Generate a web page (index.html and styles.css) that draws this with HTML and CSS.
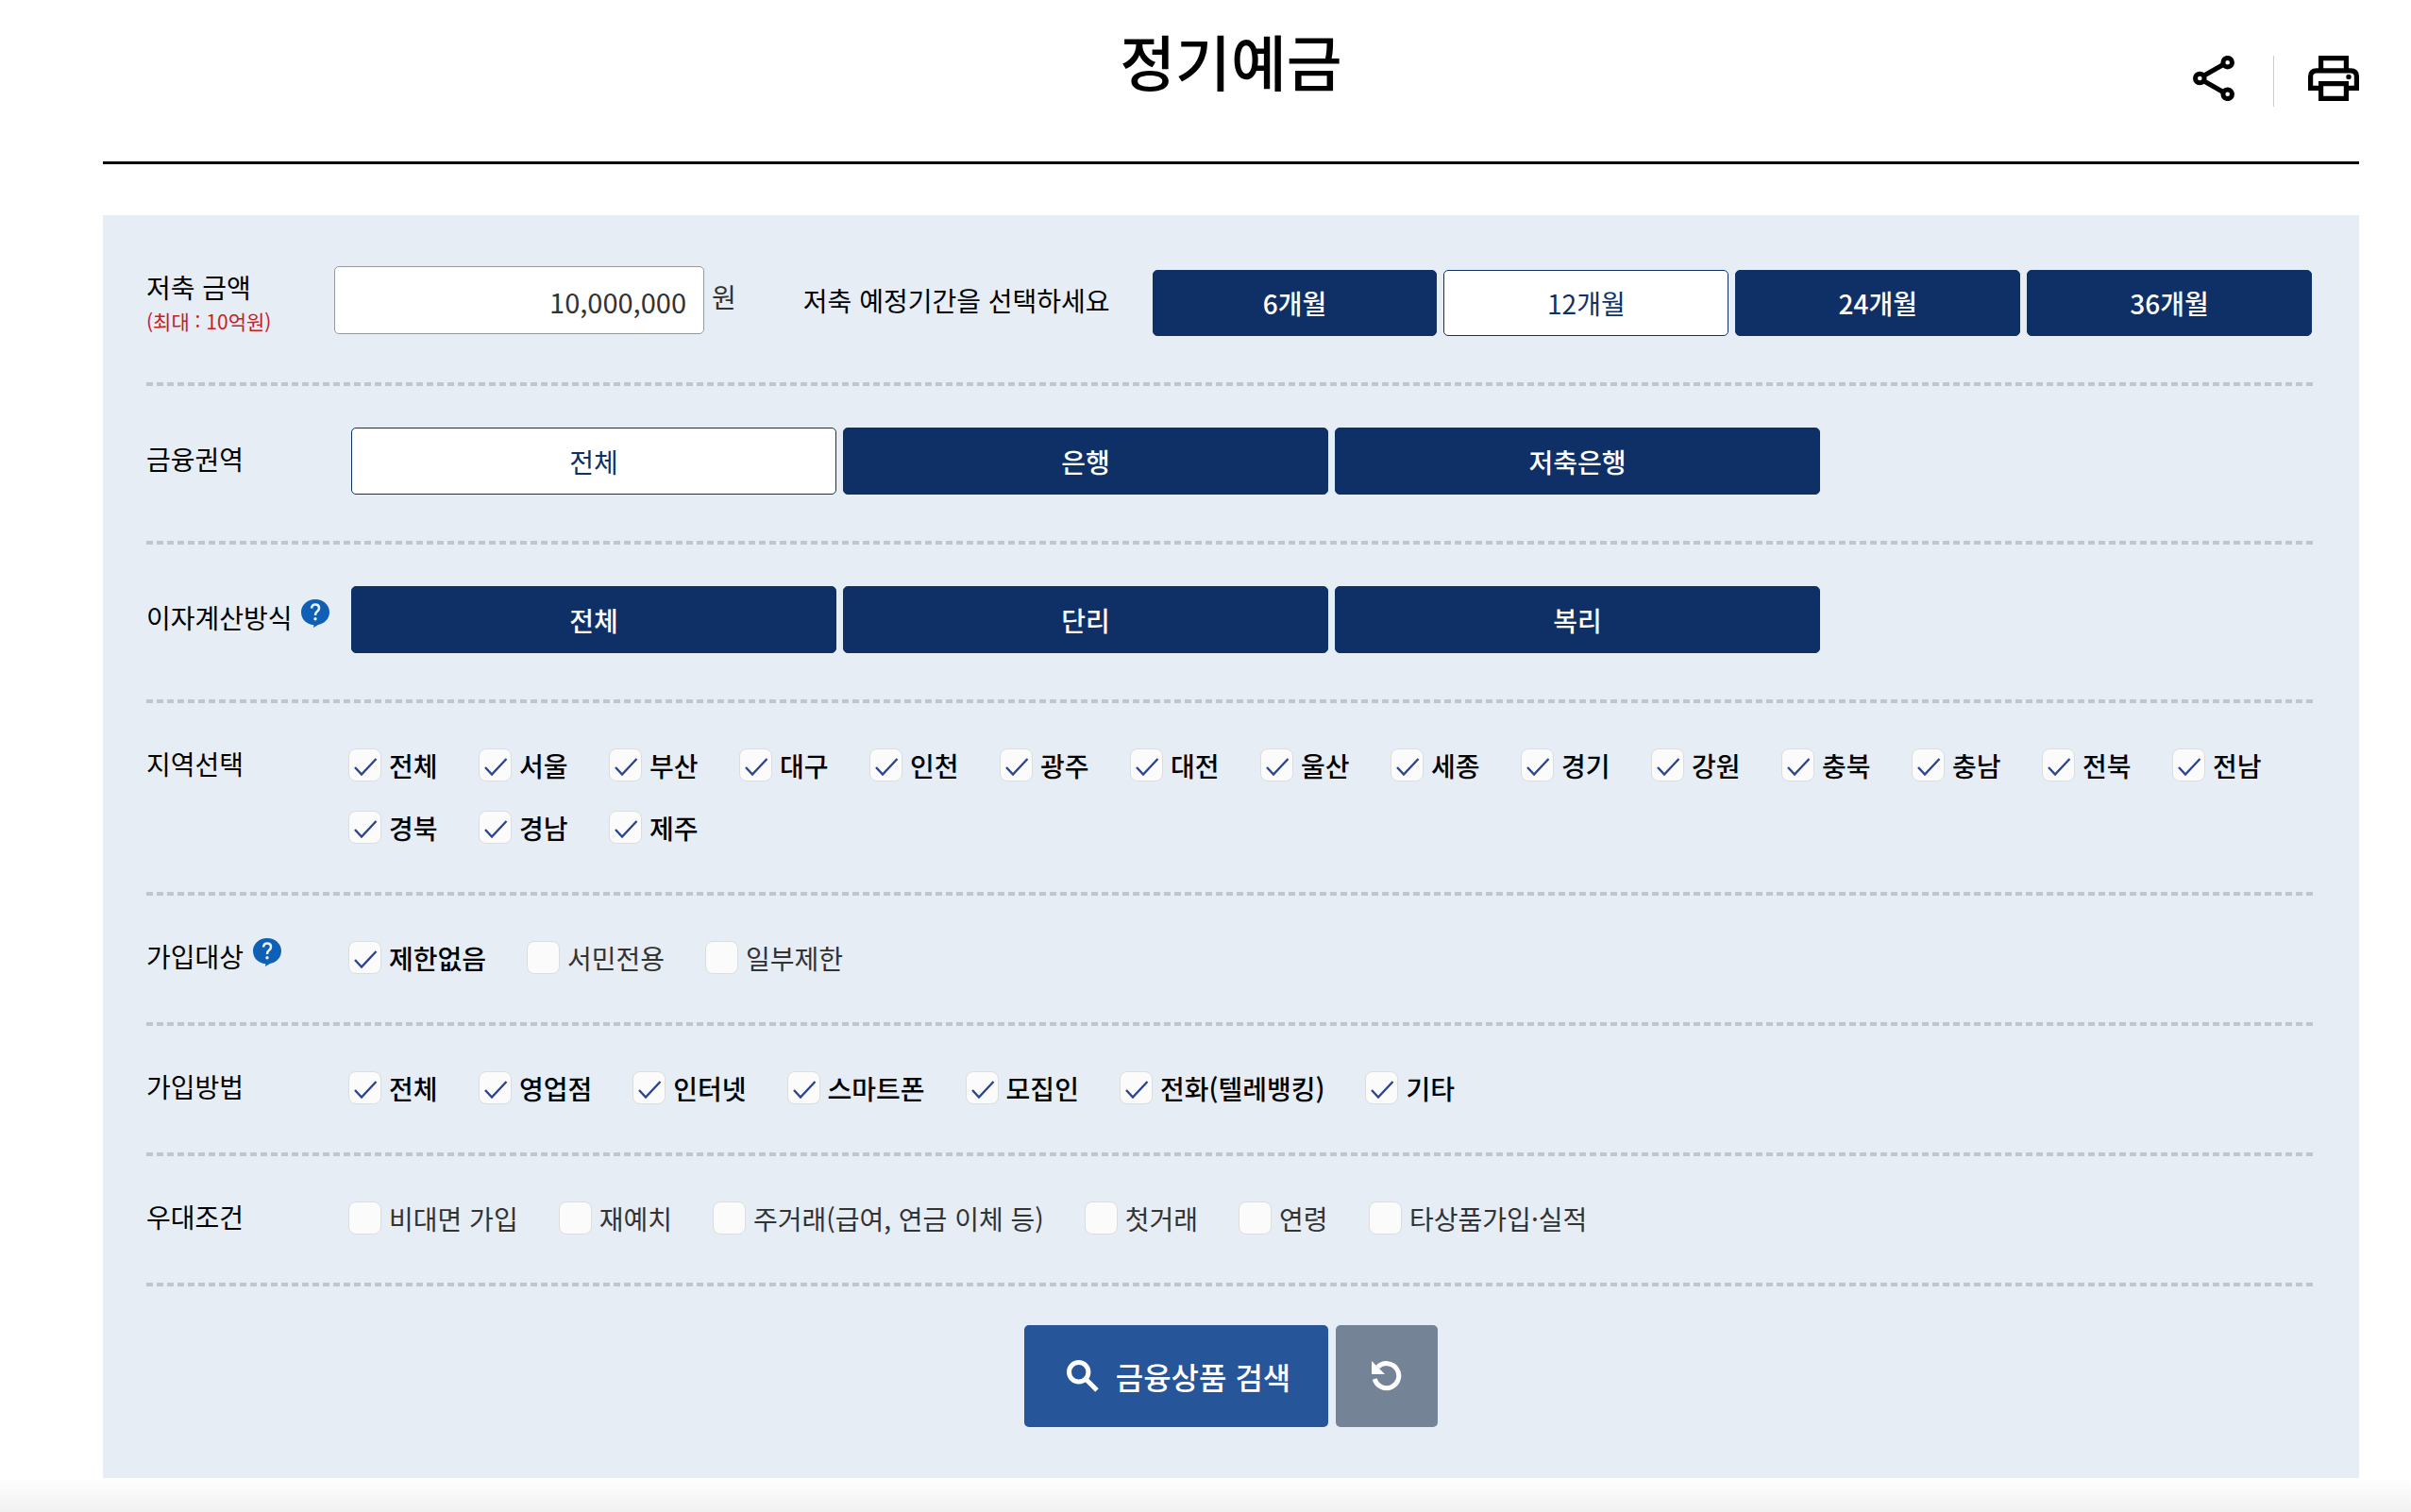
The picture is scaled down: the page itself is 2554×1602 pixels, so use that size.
FILE: index.html
```
<!DOCTYPE html>
<html lang="ko">
<head>
    <meta charset="UTF-8">
    <meta name="viewport" content="width=device-width, initial-scale=1.0">
    <title>정기예금</title>
    <link rel="stylesheet" href="styles.css">
</head>
<body>
    <div class="wrap">
        <header class="header">
            <h1>정기예금</h1>
            <div class="tools">
                <button type="button" class="icon-btn" aria-label="공유">
                    <svg width="44" height="48" viewBox="0 0 44 48" fill="none" stroke="#000" stroke-width="5">
                        <path d="M11 21.500L32 9.500M11 26.500L32 38.500"/>
                        <circle cx="7.300" cy="24" r="4.800"/>
                        <circle cx="36.700" cy="7.200" r="4.800"/>
                        <circle cx="36.700" cy="40.800" r="4.800"/>
                    </svg>
                </button>
                <span class="bar"></span>
                <button type="button" class="icon-btn" aria-label="인쇄">
                    <svg width="54" height="48" viewBox="0 0 54 48" fill="none" stroke="#000" stroke-width="5.200">
                        <path d="M13.600 15V2.600H40.400V15"/>
                        <path d="M13.600 34.400H2.600V22Q2.600 15.800 9 15.800H45Q51.400 15.800 51.400 22V34.400H40.400"/>
                        <path d="M13.600 29.600H40.400V45.400H13.600Z"/>
                        <circle cx="43" cy="22.500" r="2.700" fill="#000" stroke="none"/>
                    </svg>
                </button>
            </div>
        </header>

        <form class="search">
            <!-- 저축 금액, 기간 -->
            <div class="row row-money">
                <label class="tit" for="money">저축 금액<em>(최대 : 10억원)</em></label>
                <div class="money">
                    <input type="text" id="money" value="10,000,000">
                    <span>원</span>
                </div>
                <p class="term-tit">저축 예정기간을 선택하세요</p>
                <div class="btns term">
                    <button type="button">6개월</button>
                    <button type="button" class="on">12개월</button>
                    <button type="button">24개월</button>
                    <button type="button">36개월</button>
                </div>
            </div>

            <!-- 금융권역 -->
            <div class="row row-btn">
                <p class="tit">금융권역</p>
                <div class="btns">
                    <button type="button" class="on">전체</button>
                    <button type="button">은행</button>
                    <button type="button">저축은행</button>
                </div>
            </div>

            <!-- 이자계산방식 -->
            <div class="row row-btn">
                <p class="tit">이자계산방식
                    <button type="button" class="help" aria-label="도움말">
                        <svg width="30" height="30" viewBox="0 0 30 30">
                            <path d="M15 0C23.500 0 30 6 30 13.500C30 20.500 25 25.500 18 27L13 30L13.500 27.300C5.500 26.500 0 21 0 13.500C0 6 6.500 0 15 0Z" fill="#0f5fb4"/>
                            <path d="M11 9.500Q11.500 5.500 15 5.500Q19 5.500 19 9.300Q19 11.500 16.800 13Q15 14.300 15 17" fill="none" stroke="#e8f2fb" stroke-width="2.600"/>
                            <circle cx="15" cy="20.700" r="1.700" fill="#e8f2fb"/>
                        </svg>
                    </button>
                </p>
                <div class="btns">
                    <button type="button">전체</button>
                    <button type="button">단리</button>
                    <button type="button">복리</button>
                </div>
            </div>

            <!-- 지역선택 -->
            <div class="row">
                <p class="tit">지역선택</p>
                <ul class="checks">
                    <li><input type="checkbox" id="area1" checked><label for="area1">전체</label></li>
                    <li><input type="checkbox" id="area2" checked><label for="area2">서울</label></li>
                    <li><input type="checkbox" id="area3" checked><label for="area3">부산</label></li>
                    <li><input type="checkbox" id="area4" checked><label for="area4">대구</label></li>
                    <li><input type="checkbox" id="area5" checked><label for="area5">인천</label></li>
                    <li><input type="checkbox" id="area6" checked><label for="area6">광주</label></li>
                    <li><input type="checkbox" id="area7" checked><label for="area7">대전</label></li>
                    <li><input type="checkbox" id="area8" checked><label for="area8">울산</label></li>
                    <li><input type="checkbox" id="area9" checked><label for="area9">세종</label></li>
                    <li><input type="checkbox" id="area10" checked><label for="area10">경기</label></li>
                    <li><input type="checkbox" id="area11" checked><label for="area11">강원</label></li>
                    <li><input type="checkbox" id="area12" checked><label for="area12">충북</label></li>
                    <li><input type="checkbox" id="area13" checked><label for="area13">충남</label></li>
                    <li><input type="checkbox" id="area14" checked><label for="area14">전북</label></li>
                    <li><input type="checkbox" id="area15" checked><label for="area15">전남</label></li>
                    <li><input type="checkbox" id="area16" checked><label for="area16">경북</label></li>
                    <li><input type="checkbox" id="area17" checked><label for="area17">경남</label></li>
                    <li><input type="checkbox" id="area18" checked><label for="area18">제주</label></li>
                </ul>
            </div>

            <!-- 가입대상 -->
            <div class="row">
                <p class="tit">가입대상
                    <button type="button" class="help" aria-label="도움말">
                        <svg width="30" height="30" viewBox="0 0 30 30">
                            <path d="M15 0C23.500 0 30 6 30 13.500C30 20.500 25 25.500 18 27L13 30L13.500 27.300C5.500 26.500 0 21 0 13.500C0 6 6.500 0 15 0Z" fill="#0f5fb4"/>
                            <path d="M11 9.500Q11.500 5.500 15 5.500Q19 5.500 19 9.300Q19 11.500 16.800 13Q15 14.300 15 17" fill="none" stroke="#e8f2fb" stroke-width="2.600"/>
                            <circle cx="15" cy="20.700" r="1.700" fill="#e8f2fb"/>
                        </svg>
                    </button>
                </p>
                <ul class="checks">
                    <li><input type="checkbox" id="target1" checked><label for="target1">제한없음</label></li>
                    <li><input type="checkbox" id="target2"><label for="target2">서민전용</label></li>
                    <li><input type="checkbox" id="target3"><label for="target3">일부제한</label></li>
                </ul>
            </div>

            <!-- 가입방법 -->
            <div class="row">
                <p class="tit">가입방법</p>
                <ul class="checks">
                    <li><input type="checkbox" id="way1" checked><label for="way1">전체</label></li>
                    <li><input type="checkbox" id="way2" checked><label for="way2">영업점</label></li>
                    <li><input type="checkbox" id="way3" checked><label for="way3">인터넷</label></li>
                    <li><input type="checkbox" id="way4" checked><label for="way4">스마트폰</label></li>
                    <li><input type="checkbox" id="way5" checked><label for="way5">모집인</label></li>
                    <li><input type="checkbox" id="way6" checked><label for="way6">전화(텔레뱅킹)</label></li>
                    <li><input type="checkbox" id="way7" checked><label for="way7">기타</label></li>
                </ul>
            </div>

            <!-- 우대조건 -->
            <div class="row">
                <p class="tit">우대조건</p>
                <ul class="checks">
                    <li><input type="checkbox" id="plus1"><label for="plus1">비대면 가입</label></li>
                    <li><input type="checkbox" id="plus2"><label for="plus2">재예치</label></li>
                    <li><input type="checkbox" id="plus3"><label for="plus3">주거래(급여, 연금 이체 등)</label></li>
                    <li><input type="checkbox" id="plus4"><label for="plus4">첫거래</label></li>
                    <li><input type="checkbox" id="plus5"><label for="plus5">연령</label></li>
                    <li><input type="checkbox" id="plus6"><label for="plus6">타상품가입·실적</label></li>
                </ul>
            </div>

            <div class="submit">
                <button type="submit" class="btn-search">
                    <svg width="34" height="34" viewBox="0 0 34 34" fill="none" stroke="#fff">
                        <circle cx="12.700" cy="12.700" r="10.200" stroke-width="5"/>
                        <path d="M20.500 20.500L32 32" stroke-width="5"/>
                    </svg>
                    금융상품 검색
                </button>
                <button type="reset" class="btn-reset" aria-label="초기화">
                    <svg width="32" height="32" viewBox="0 0 32 32">
                        <path d="M6.500 6.500A13 13 0 1 1 3.200 19" fill="none" stroke="#fff" stroke-width="5"/>
                        <path d="M0 0V14H14Z" fill="#fff"/>
                    </svg>
                </button>
            </div>
        </form>
    </div>
    <div class="shade"></div>
</body>
</html>
```

FILE: styles.css
```
*{
    box-sizing: border-box;
    margin: 0;
    padding: 0;
}
body{
    display: flex;
    flex-direction: column;
    min-height: 100vh;
    font-family: "Noto Sans CJK KR", "Noto Sans", sans-serif;
    font-size: 28px;
    line-height: 36px;
    color: #000;
    background-color: #fff;
}
button,
input{
    font: inherit;
}
button{
    border: 0;
    cursor: pointer;
}
ul{
    list-style: none;
}
.wrap{
    padding: 0 55px 0 109px;
}

/* 상단 제목 */
.header{
    display: grid;
    grid-template-columns: 1fr auto 1fr;
    align-items: start;
    padding: 15px 0 58px;
    border-bottom: 3px solid #000;
}
.header h1{
    grid-column: 2;
    font-size: 64px;
    font-weight: 500;
    line-height: 96px;
}
.tools{
    display: flex;
    justify-content: flex-end;
    padding-top: 44px;
}
.icon-btn{
    height: 48px;
    background: none;
}
.icon-btn svg{
    display: block;
}
.bar{
    width: 1px;
    height: 54px;
    margin: 0 36px 0 41px;
    background-color: #ccc;
}

/* 검색 조건 */
.search{
    margin-top: 54px;
    padding: 0 46px 54px;
    background-color: #e6edf5;
}
.row{
    display: flex;
    align-items: flex-start;
    padding: 48px 0 55px;
    /* 점선 */
    background: repeating-linear-gradient(to right, #c2c5ca 0, #c2c5ca 7px, transparent 7px, transparent 11px) left bottom / 100% 4px no-repeat;
}
.tit{
    flex: none;
    width: 214px;
    line-height: 32px;
}
.tit em{
    display: block;
    font-size: 21px;
    font-style: normal;
    color: #c7201f;
}
.help{
    margin: -3px 0 0 2px;
    vertical-align: top;
    background: none;
}
.help svg{
    display: block;
}
.row-money{
    padding: 54px 4px 51px 0;
}
.row-money .tit{
    width: 199px;
    padding-top: 4px;
    line-height: 36px;
}
.money{
    display: flex;
    gap: 8px;
    line-height: 64px;
    color: #333;
}
.money input{
    width: 392px;
    height: 72px;
    padding: 2px 18px 0;
    font-size: 29px;
    text-align: right;
    color: #333;
    border: 1px solid #999;
    border-radius: 5px;
    background-color: #fff;
}
.term-tit{
    margin: 0 45px 0 71px;
    line-height: 72px;
}
.btns{
    display: flex;
    gap: 7px;
}
.btns button{
    height: 71px;
    font-weight: 500;
    color: #fff;
    border: 1px solid #0f3067;
    border-radius: 5px;
    background-color: #0f3067;
}
.btns .on{
    font-weight: 400;
    color: #0f3067;
    background-color: #fff;
}
.term{
    flex: 1;
    padding-top: 4px;
}
.term button{
    flex: 1;
    height: 70px;
}
.row-btn{
    align-items: center;
    padding: 44px 0 53px;
}
.row-btn .tit{
    padding-bottom: 5px;
}
.row-btn .btns{
    width: 75%;
    max-width: 1559px;
    padding-left: 3px;
}
.row-btn .btns button{
    flex: 1;
}

/* 체크박스 */
.checks{
    display: flex;
    flex-wrap: wrap;
    gap: 31px 43px;
}
.checks li{
    display: flex;
    align-items: center;
    gap: 8px;
    height: 35px;
}
.checks input{
    appearance: none;
    width: 35px;
    height: 35px;
    border: 1px solid #ddd;
    border-radius: 8px;
    background-color: #fbfbfb;
}
.checks input:checked{
    background-image: url("data:image/svg+xml,%3Csvg xmlns='http://www.w3.org/2000/svg' viewBox='0 0 33 33'%3E%3Cpath d='M6 19l7 7.500L28.500 10' fill='none' stroke='%232b4594' stroke-width='2.400'/%3E%3C/svg%3E");
}
.checks label{
    min-width: 52px;
    color: #333;
}
.checks input:checked + label{
    font-weight: 500;
    color: #000;
}

/* 하단 버튼 */
.submit{
    display: flex;
    justify-content: center;
    gap: 8px;
    padding-top: 41px;
}
.submit button{
    display: flex;
    align-items: center;
    justify-content: center;
    height: 108px;
    border-radius: 5px;
}
.btn-search{
    gap: 18px;
    padding: 0 40px 0 45px;
    font-size: 32px;
    font-weight: 500;
    color: #fff;
    background-color: #265599;
}
.btn-reset{
    width: 108px;
    background-color: #748496;
}
.shade{
    flex: 1;
    min-height: 36px;
    background: linear-gradient(#fff, #f1f1f1);
}
```
